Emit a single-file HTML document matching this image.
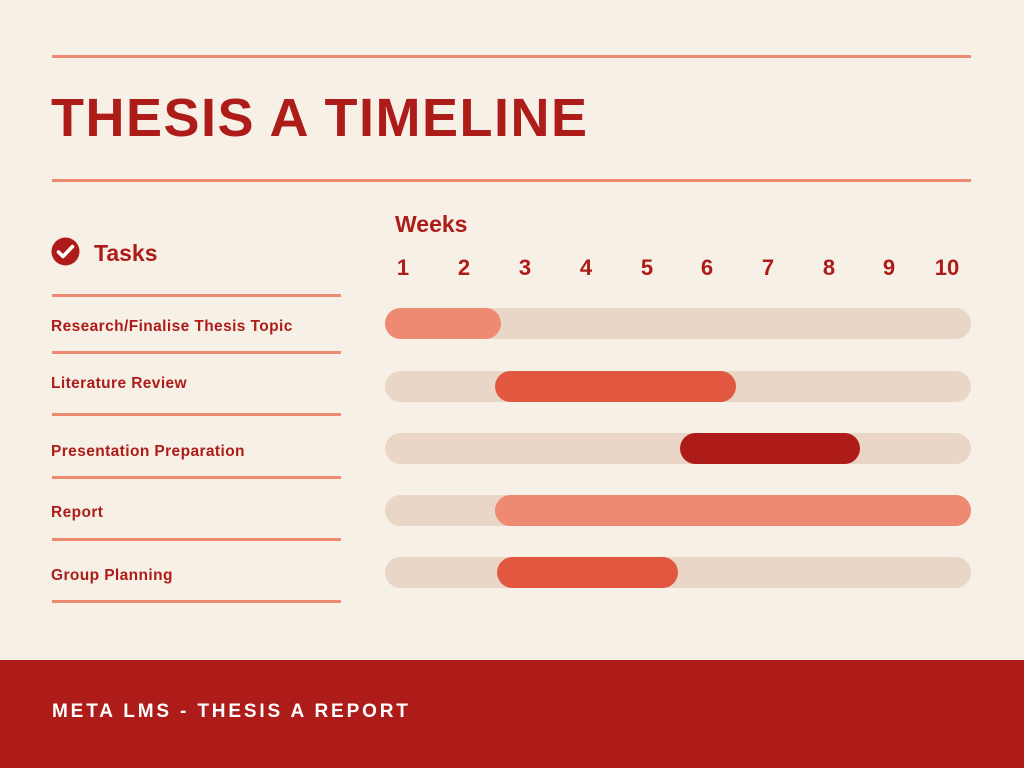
<!DOCTYPE html><html><head><style>
body{margin:0;width:1024px;height:768px;background:#f7f0e7;position:relative;overflow:hidden;font-family:"Liberation Sans",sans-serif;color:#ad1c18}
.a{position:absolute}
.hl{position:absolute;height:3px;background:#ef8a72}
.bar{position:absolute;left:385px;width:586px;height:31px;border-radius:16px;background:#e9d6c6}
.f{position:absolute;height:31px;border-radius:16px}
.t{position:absolute;left:51px;font-size:15.5px;font-weight:bold;letter-spacing:.4px}
.n{position:absolute;top:255px;font-size:22px;font-weight:bold;width:40px;text-align:center}
</style></head><body>
<div class="hl" style="left:52px;top:55px;width:919px"></div>
<div class="a" style="left:51px;top:87px;font-size:54px;font-weight:bold;letter-spacing:1.5px">THESIS A TIMELINE</div>
<div class="hl" style="left:52px;top:179px;width:919px"></div>
<svg class="a" style="left:51px;top:237px" width="29" height="29" viewBox="0 0 29 29"><circle cx="14.5" cy="14.5" r="14" fill="#ad1c18"/><path d="M7.5 15l4.5 4.5 9.5-10" stroke="#fff" stroke-width="3.6" fill="none" stroke-linecap="round" stroke-linejoin="round"/></svg>
<div class="a" style="left:94px;top:240px;font-size:23px;font-weight:bold">Tasks</div>
<div class="a" style="left:395px;top:211px;font-size:23px;font-weight:bold">Weeks</div>
<div class="n" style="left:383px">1</div><div class="n" style="left:444px">2</div><div class="n" style="left:505px">3</div><div class="n" style="left:566px">4</div><div class="n" style="left:627px">5</div><div class="n" style="left:687px">6</div><div class="n" style="left:748px">7</div><div class="n" style="left:809px">8</div><div class="n" style="left:869px">9</div><div class="n" style="left:927px">10</div>
<div class="hl" style="left:52px;top:294px;width:289px"></div>
<div class="hl" style="left:52px;top:351px;width:289px"></div>
<div class="hl" style="left:52px;top:413px;width:289px"></div>
<div class="hl" style="left:52px;top:476px;width:289px"></div>
<div class="hl" style="left:52px;top:538px;width:289px"></div>
<div class="hl" style="left:52px;top:600px;width:289px"></div>
<div class="t" style="top:318px">Research/Finalise Thesis Topic</div>
<div class="t" style="top:375px">Literature Review</div>
<div class="t" style="top:443px">Presentation Preparation</div>
<div class="t" style="top:504px">Report</div>
<div class="t" style="top:567px">Group Planning</div>
<div class="bar" style="top:308px"></div><div class="f" style="top:308px;left:385px;width:116px;background:#ef8a72"></div>
<div class="bar" style="top:371px"></div><div class="f" style="top:371px;left:495px;width:241px;background:#e2573f"></div>
<div class="bar" style="top:433px"></div><div class="f" style="top:433px;left:680px;width:180px;background:#ad1c18"></div>
<div class="bar" style="top:495px"></div><div class="f" style="top:495px;left:495px;width:476px;background:#ef8a72"></div>
<div class="bar" style="top:557px"></div><div class="f" style="top:557px;left:497px;width:181px;background:#e2573f"></div>
<div class="a" style="left:0;top:660px;width:1024px;height:108px;background:#ad1c18"></div>
<div class="a" style="left:52px;top:701px;font-size:19px;font-weight:bold;color:#fff;letter-spacing:2.85px">META LMS - THESIS A REPORT</div>
</body></html>
